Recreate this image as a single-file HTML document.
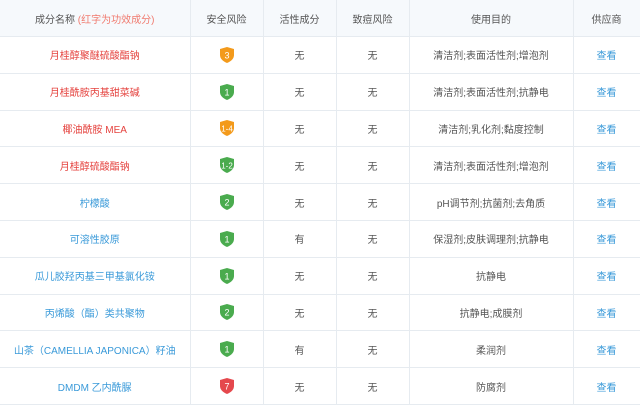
<!DOCTYPE html>
<html><head><meta charset="utf-8"><style>
body{margin:0;width:640px;height:406px;overflow:hidden;background:#fff;font-family:"Liberation Sans","Noto Sans CJK SC",sans-serif;font-size:10px;color:#555}
table{border-collapse:collapse;width:640px;table-layout:fixed}
td,th{border:1px solid #e6ebf0;text-align:center;padding:0;height:35.8px;font-weight:normal}
th{background:#f6f9fc;color:#555;height:36px}
tr td:first-child,tr th:first-child{border-left:none}
tr:first-child th{border-top:none}
.r{color:#e5433f}.b{color:#3a9ad9}
.s{display:inline-block;vertical-align:middle}
</style></head><body>
<table>
<colgroup><col style="width:190px"><col style="width:73px"><col style="width:73px"><col style="width:73px"><col style="width:164px"><col style="width:67px"></colgroup>
<tr><th>成分名称 <span class="r" style="color:#f07b6f">(红字为功效成分)</span></th><th>安全风险</th><th>活性成分</th><th>致痘风险</th><th>使用目的</th><th>供应商</th></tr>
<tr><td class="r">月桂醇聚醚硫酸酯钠</td><td><svg class="s" width="14" height="16"><path d="M7 0L14 2V8Q14 13 7 16Q0 13 0 8V2Z" fill="#f39a1b"/><text x="7" y="11.5" font-size="9" fill="#fff" text-anchor="middle">3</text></svg></td><td>无</td><td>无</td><td>清洁剂;表面活性剂;增泡剂</td><td class="b">查看</td></tr>
<tr><td class="r">月桂酰胺丙基甜菜碱</td><td><svg class="s" width="14" height="16"><path d="M7 0L14 2V8Q14 13 7 16Q0 13 0 8V2Z" fill="#4aab4e"/><text x="7" y="11.5" font-size="9" fill="#fff" text-anchor="middle">1</text></svg></td><td>无</td><td>无</td><td>清洁剂;表面活性剂;抗静电</td><td class="b">查看</td></tr>
<tr><td class="r">椰油酰胺 MEA</td><td><svg class="s" width="14" height="16"><path d="M7 0L14 2V8Q14 13 7 16Q0 13 0 8V2Z" fill="#f39a1b"/><text x="7" y="11.5" font-size="8" fill="#fff" text-anchor="middle">1-4</text></svg></td><td>无</td><td>无</td><td>清洁剂;乳化剂;黏度控制</td><td class="b">查看</td></tr>
<tr><td class="r">月桂醇硫酸酯钠</td><td><svg class="s" width="14" height="16"><path d="M7 0L14 2V8Q14 13 7 16Q0 13 0 8V2Z" fill="#4aab4e"/><text x="7" y="11.5" font-size="8" fill="#fff" text-anchor="middle">1-2</text></svg></td><td>无</td><td>无</td><td>清洁剂;表面活性剂;增泡剂</td><td class="b">查看</td></tr>
<tr><td class="b">柠檬酸</td><td><svg class="s" width="14" height="16"><path d="M7 0L14 2V8Q14 13 7 16Q0 13 0 8V2Z" fill="#4aab4e"/><text x="7" y="11.5" font-size="9" fill="#fff" text-anchor="middle">2</text></svg></td><td>无</td><td>无</td><td>pH调节剂;抗菌剂;去角质</td><td class="b">查看</td></tr>
<tr><td class="b">可溶性胶原</td><td><svg class="s" width="14" height="16"><path d="M7 0L14 2V8Q14 13 7 16Q0 13 0 8V2Z" fill="#4aab4e"/><text x="7" y="11.5" font-size="9" fill="#fff" text-anchor="middle">1</text></svg></td><td>有</td><td>无</td><td>保湿剂;皮肤调理剂;抗静电</td><td class="b">查看</td></tr>
<tr><td class="b">瓜儿胶羟丙基三甲基氯化铵</td><td><svg class="s" width="14" height="16"><path d="M7 0L14 2V8Q14 13 7 16Q0 13 0 8V2Z" fill="#4aab4e"/><text x="7" y="11.5" font-size="9" fill="#fff" text-anchor="middle">1</text></svg></td><td>无</td><td>无</td><td>抗静电</td><td class="b">查看</td></tr>
<tr><td class="b">丙烯酸（酯）类共聚物</td><td><svg class="s" width="14" height="16"><path d="M7 0L14 2V8Q14 13 7 16Q0 13 0 8V2Z" fill="#4aab4e"/><text x="7" y="11.5" font-size="9" fill="#fff" text-anchor="middle">2</text></svg></td><td>无</td><td>无</td><td>抗静电;成膜剂</td><td class="b">查看</td></tr>
<tr><td class="b">山茶（CAMELLIA JAPONICA）籽油</td><td><svg class="s" width="14" height="16"><path d="M7 0L14 2V8Q14 13 7 16Q0 13 0 8V2Z" fill="#4aab4e"/><text x="7" y="11.5" font-size="9" fill="#fff" text-anchor="middle">1</text></svg></td><td>有</td><td>无</td><td>柔润剂</td><td class="b">查看</td></tr>
<tr><td class="b">DMDM 乙内酰脲</td><td><svg class="s" width="14" height="16"><path d="M7 0L14 2V8Q14 13 7 16Q0 13 0 8V2Z" fill="#e5484d"/><text x="7" y="11.5" font-size="9" fill="#fff" text-anchor="middle">7</text></svg></td><td>无</td><td>无</td><td>防腐剂</td><td class="b">查看</td></tr>
</table>
</body></html>
